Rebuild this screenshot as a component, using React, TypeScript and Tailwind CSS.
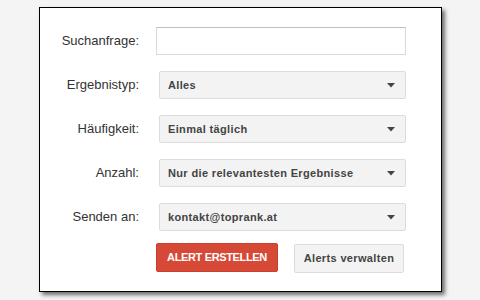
import React from 'react';

const rows = [
    { label: 'Ergebnistyp:', value: 'Alles' },
    { label: 'Häufigkeit:', value: 'Einmal täglich' },
    { label: 'Anzahl:', value: 'Nur die relevantesten Ergebnisse' },
    { label: 'Senden an:', value: 'kontakt@toprank.at' },
];

const Arrow = () => (
    <svg width="8" height="5" viewBox="0 0 8 5" className="shrink-0">
        <path d="M0 0 L8 0 L4 4.5 Z" fill="#444" />
    </svg>
);

export default function App() {
    return (
        <div className="w-[480px] h-[300px] bg-[#f4f4f4] pt-[7px] pl-[39px] font-['Liberation_Sans',Arial,sans-serif]">
            <div className="w-[403px] h-[285px] bg-white border border-black shadow-[3px_3px_4px_rgba(0,0,0,0.55)] pt-[19px]">
                <div className="grid grid-cols-[99px_250px] gap-x-[17px] gap-y-[16px] items-center">
                    <label className="text-right text-[13px] text-[#333]">Suchanfrage:</label>
                    <input
                        type="text"
                        className="h-[28px] w-[250px] border border-[#d9d9d9] border-t-[#c0c0c0] bg-white outline-none"
                    />
                    {rows.map((row) => (
                        <React.Fragment key={row.label}>
                            <label className="text-right text-[13px] text-[#333]">{row.label}</label>
                            <div className="ml-[3px] h-[28px] w-[247px] flex items-center justify-between pl-[8px] pr-[10px] rounded-[2px] border border-[#dcdcdc] bg-[#f3f3f3]">
                                <span className="text-[11px] font-bold text-[#444] tracking-[0.35px]">{row.value}</span>
                                <Arrow />
                            </div>
                        </React.Fragment>
                    ))}
                </div>
                <div className="flex gap-[16px] ml-[116px] mt-[12px]">
                    <button className="h-[29px] w-[122px] rounded-[2px] bg-[#d64937] border border-[#c9402e] text-white text-[11px] font-bold tracking-[-0.35px]">
                        ALERT ERSTELLEN
                    </button>
                    <button className="mt-[1px] h-[29px] w-[110px] rounded-[2px] bg-[#f3f3f3] border border-[#dcdcdc] text-[#444] text-[11px] font-bold tracking-[0.35px]">
                        Alerts verwalten
                    </button>
                </div>
            </div>
        </div>
    );
}
